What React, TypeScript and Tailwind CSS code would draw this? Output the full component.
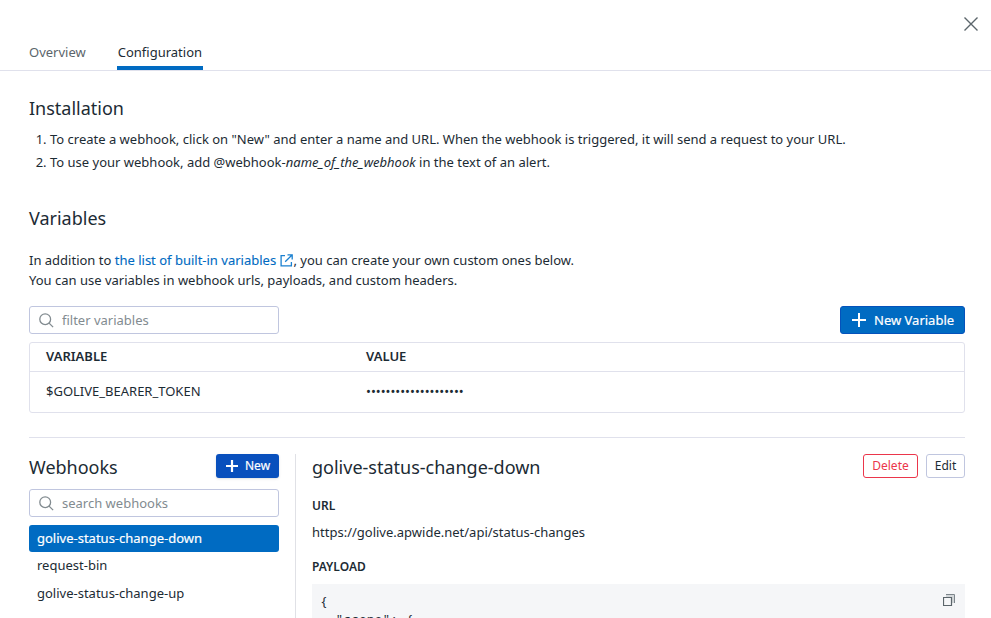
import React from 'react';

interface Variable {
  name: string;
  value: string;
}

interface SearchFieldProps {
  placeholder: string;
}

const variables: Variable[] = [
  { name: '$GOLIVE_BEARER_TOKEN', value: '••••••••••••••••••••' },
];

const webhooks = ['golive-status-change-down', 'request-bin', 'golive-status-change-up'];

const payload = `{
  "scope": {
    "type": "environment"
  }
}`;

const SearchField: React.FC<SearchFieldProps> = ({ placeholder }) => (
  <label className="flex h-7 w-[250px] items-center rounded-[3px] border border-[#c0c6df] bg-white pl-[9px]">
    <svg width="15" height="15" viewBox="0 0 15 15" fill="none" stroke="#828b90" strokeWidth="1.3" className="shrink-0">
      <circle cx="6.2" cy="6.2" r="5.4" />
      <path d="M10.1 10.1l4 4" />
    </svg>
    <input
      type="text"
      placeholder={placeholder}
      className="ml-2 w-full bg-transparent text-[13px] leading-5 outline-none placeholder:text-[#828b90]"
    />
  </label>
);

const App: React.FC = () => {
  return (
    <div className="flex h-[618px] w-full flex-col overflow-hidden bg-white font-['Noto_Sans',sans-serif] text-[13px] leading-5 text-[#1c2b34]">
      {/* Tabs */}
      <header className="flex h-[71px] shrink-0 justify-between border-b border-[#e0e1ec]">
        <nav className="flex items-end gap-[30px] pl-7">
          <button className="h-7 border-b-4 border-transparent px-px pb-1 text-[#5b656b]">Overview</button>
          <button className="h-7 border-b-4 border-[#006bc2] px-px pb-1">Configuration</button>
        </nav>
        <button aria-label="Close" className="mt-[17px] mr-[13px] h-[14px] w-[14px]">
          <svg width="14" height="14" viewBox="0 0 14 14" fill="none" stroke="#5b656b" strokeWidth="1.4">
            <path d="M0.5 0.5l13 13M13.5 0.5l-13 13" />
          </svg>
        </button>
      </header>

      <main className="flex min-h-0 flex-1 flex-col pr-[26px] pl-[29px]">
        {/* Installation */}
        <h2 className="mt-[25px] text-lg leading-6">Installation</h2>
        <ol className="mt-[9px] list-decimal space-y-[3px] pl-[21px]">
          <li>To create a webhook, click on "New" and enter a name and URL. When the webhook is triggered, it will send a request to your URL.</li>
          <li>To use your webhook, add @webhook-<em>name_of_the_webhook</em> in the text of an alert.</li>
        </ol>

        {/* Variables */}
        <h2 className="mt-[34px] text-lg leading-6">Variables</h2>
        <p className="mt-5">
          In addition to{' '}
          <a className="text-[#006bc2] [-webkit-text-stroke:0.1px]">
            the list of built-in variables{' '}
            <svg width="13" height="13" viewBox="0 0 13 13" fill="none" stroke="#1a80d0" strokeWidth="1.3" className="inline align-[-1.5px]">
              <path d="M5 1.6H1.1v10.3h10.3V8M7.5 0.8h4.7v4.7M12 1L5.2 7.8" />
            </svg>
          </a>
          <span className="ml-px">, you can create your own custom ones below.</span>
          <br />
          You can use variables in webhook urls, payloads, and custom headers.
        </p>

        <div className="mt-4 flex items-center justify-between">
          <SearchField placeholder="filter variables" />
          <button className="flex h-7 w-[125px] items-center rounded-[3px] border border-[#0552bb] bg-[#006bc2] pl-[11px] text-white [-webkit-text-stroke:0.2px]">
            <svg width="14" height="14" viewBox="0 0 14 14" stroke="currentColor" strokeWidth="2">
              <path d="M7 0v14M0 7h14" />
            </svg>
            <span className="ml-2">New Variable</span>
          </button>
        </div>

        <div className="mt-2 shrink-0 rounded-[3px] border border-[#e0e1ec]">
          <div className="grid h-[29px] grid-cols-[320px_1fr] items-center border-b border-[#e0e1ec] pb-0.5 pl-4 font-semibold">
            <span>VARIABLE</span>
            <span>VALUE</span>
          </div>
          {variables.map((variable) => (
            <div key={variable.name} className="grid h-10 grid-cols-[320px_1fr] items-center pb-0.5 pl-4">
              <span>{variable.name}</span>
              <span>{variable.value}</span>
            </div>
          ))}
        </div>

        <hr className="mt-6 border-[#e0e1ec]" />

        {/* Webhooks */}
        <section className="mt-4 flex min-h-0 flex-1">
          <aside className="w-[267px] shrink-0 border-r border-[#e0e1e6] pr-4">
            <div className="flex h-6 items-start justify-between">
              <h2 className="mt-px text-lg leading-6">Webhooks</h2>
              <button className="flex h-6 w-[63px] items-center rounded-[3px] bg-[#0950bd] pl-2.5 text-xs text-white shadow [-webkit-text-stroke:0.2px]">
                <svg width="12" height="12" viewBox="0 0 12 12" stroke="currentColor" strokeWidth="2.2">
                  <path d="M6 0v12M0 6h12" />
                </svg>
                <span className="ml-[7px]">New</span>
              </button>
            </div>
            <div className="mt-[11px]">
              <SearchField placeholder="search webhooks" />
            </div>
            <ul className="mt-2">
              {webhooks.map((name, index) => (
                <li
                  key={name}
                  className={
                    index === 0
                      ? 'h-[27px] rounded-[3px] bg-[#006bc2] px-2 leading-[27px] text-white [-webkit-text-stroke:0.2px]'
                      : 'h-7 px-2 leading-[27px]'
                  }
                >
                  {name}
                </li>
              ))}
            </ul>
          </aside>

          <div className="min-w-0 flex-1 pl-4">
            <div className="flex h-6 items-start">
              <h2 className="mt-px text-lg leading-6">golive-status-change-down</h2>
              <button className="ml-auto h-6 w-[55px] rounded-[3px] border border-[#eb364b] text-xs text-[#eb364b]">Delete</button>
              <button className="ml-2 h-6 w-[39px] rounded-[3px] border border-[#c0c6df] text-xs">Edit</button>
            </div>
            <h3 className="mt-[18px] text-xs leading-5 font-semibold">URL</h3>
            <p className="mt-1.5">https://golive.apwide.net/api/status-changes</p>
            <h3 className="mt-[15px] text-xs leading-5 font-semibold">PAYLOAD</h3>
            <div className="mt-[7px] flex items-start justify-between bg-[#f5f6f8] pt-2 pr-[10px] pl-2">
              <pre className="font-['Noto_Sans_Mono','DejaVu_Sans_Mono',monospace] text-[13px] leading-[18px]">{payload}</pre>
              <svg width="12" height="12" viewBox="0 0 12 12" fill="none" className="mt-0.5">
                <path d="M3 0.5h8.5V9" stroke="#7c858b" />
                <path d="M3 2h7v7" stroke="#d3d7da" strokeWidth="2" />
                <path d="M0.5 3.5h8v8h-8z" fill="#f5f6f8" stroke="#5b656b" strokeWidth="1.2" />
              </svg>
            </div>
          </div>
        </section>
      </main>
    </div>
  );
};

export default App;
